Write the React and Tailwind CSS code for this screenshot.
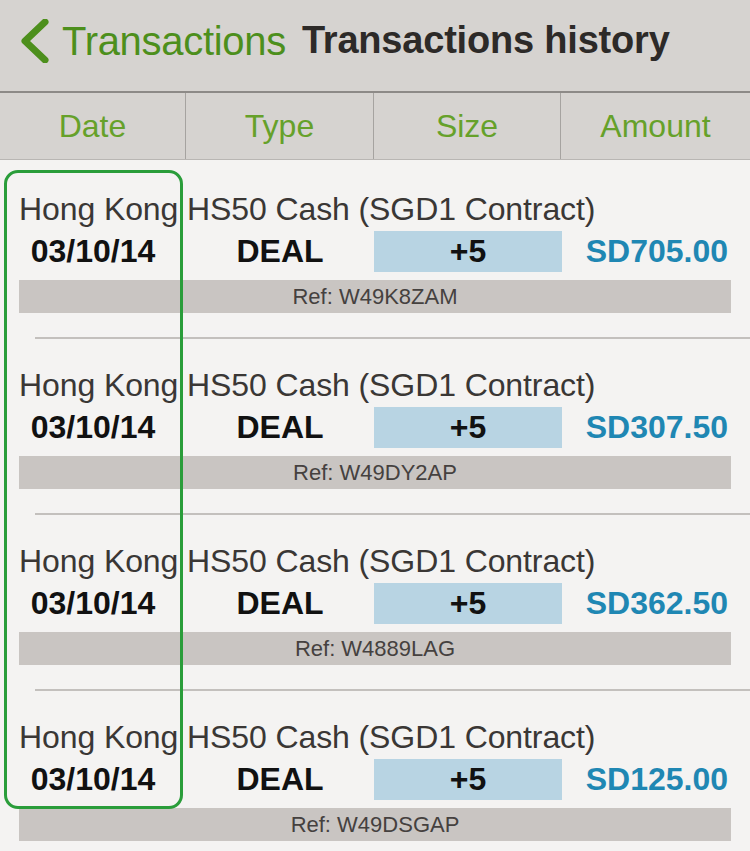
const rows = [
  { amount: "SD705.00", ref: "W49K8ZAM" },
  { amount: "SD307.50", ref: "W49DY2AP" },
  { amount: "SD362.50", ref: "W4889LAG" },
  { amount: "SD125.00", ref: "W49DSGAP" },
];

const Row = ({ amount, reference, first }) => (
  <div className={first ? "pt-[30px]" : "pt-[27px]"}>
    <div className="pl-[19px] text-[32px] leading-[38px] tracking-[-0.1px] text-[#3a3735] whitespace-nowrap">
      Hong Kong HS50 Cash (SGD1 Contract)
    </div>
    <div className="mt-[3px] grid grid-cols-[186px_188px_188px_188px] h-[41px] items-center text-[32px] leading-[41px] font-bold">
      <div className="text-center text-[#111]">03/10/14</div>
      <div className="text-center text-[#111]">DEAL</div>
      <div className="h-full bg-[#b8d4e3] flex items-center justify-center text-[#111]">+5</div>
      <div className="text-right pr-[22px] text-[#1f87b3]">{amount}</div>
    </div>
    <div className="mt-[8px] mx-[19px] h-[33px] bg-[#c9c5c2] flex items-center justify-center text-[22px] text-[#45413f]">
      Ref: {reference}
    </div>
  </div>
);

export default function App() {
  return (
    <div
      className="relative w-[750px] h-[851px] overflow-hidden bg-[#f4f3f2]"
      style={{ fontFamily: '"Liberation Sans", Arial, sans-serif' }}
    >
      {/* Nav bar */}
      <header className="h-[93px] bg-[#d6d3d0] flex items-center pl-[18px] pb-[10px] border-b-2 border-[#8d8a87]">
        <svg width="32" height="44" viewBox="0 0 32 44" className="mr-[12px]">
          <polyline points="27,3 7,22 27,41" fill="none" stroke="#4d8f1c" strokeWidth="7" strokeLinecap="round" strokeLinejoin="round" />
        </svg>
        <span className="text-[40px] text-[#4d8f1c] tracking-[-0.3px]">Transactions</span>
        <span className="ml-[16px] text-[38px] font-bold text-[#2d2a28] tracking-[-0.2px]">Transactions history</span>
      </header>

      {/* Column headers */}
      <div className="grid grid-cols-[186px_188px_187px_189px] h-[67px] bg-[#d6d3d0] border-b border-[#b9b6b3]">
        {["Date", "Type", "Size", "Amount"].map((h, i) => (
          <div
            key={h}
            className={`flex items-center justify-center text-[32px] text-[#66a12a] ${i < 3 ? "border-r border-[#a6a3a0]" : ""}`}
          >
            {h}
          </div>
        ))}
      </div>

      {/* List */}
      <div>
        {rows.map((r, i) => (
          <div key={r.ref}>
            <Row amount={r.amount} reference={r.ref} first={i === 0} />
            {i < rows.length - 1 && (
              <div className="mt-[24px] ml-[35px] h-[2px] bg-[#c3c0bd]" />
            )}
          </div>
        ))}
      </div>

      {/* Highlight annotation */}
      <div className="absolute left-[4px] top-[170px] w-[179px] h-[639px] border-[3px] border-[#2a9d3a] rounded-[14px] pointer-events-none" />
    </div>
  );
}
